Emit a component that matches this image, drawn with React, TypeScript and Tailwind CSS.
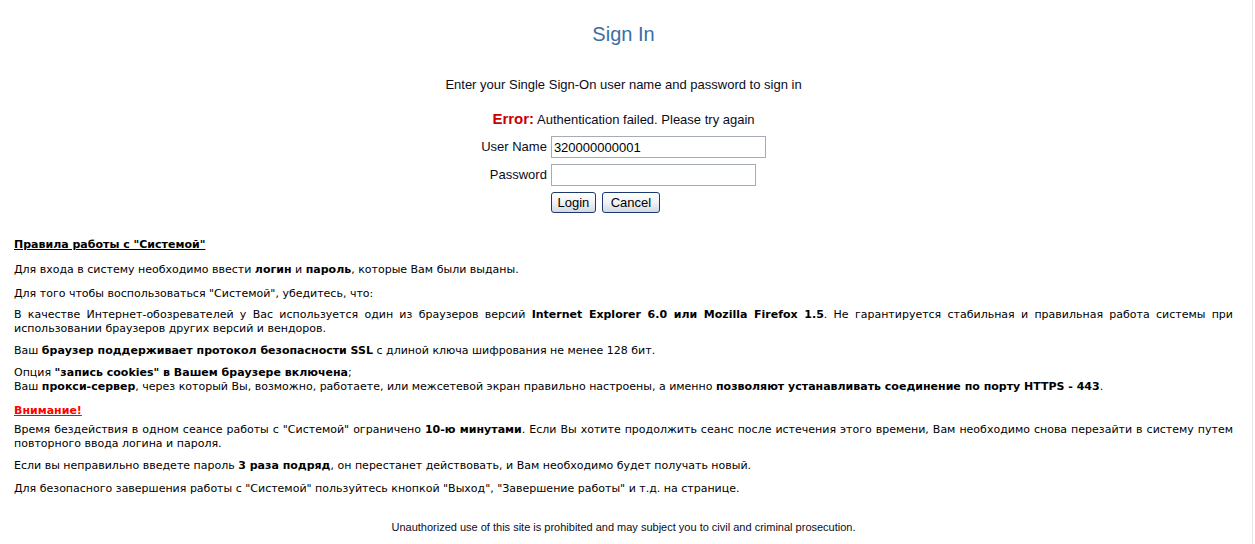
import React from 'react';

const body = "font-['DejaVu_Sans',Tahoma,sans-serif] text-[11px] leading-[14px] text-black";

function XpButton({ label, w }: { label: string; w: string }) {
  return (
    <button
      type="button"
      className={`${w} h-[21px] rounded-[3px] border border-[#1c3a6b] bg-gradient-to-b from-white via-[#f1f2f6] to-[#d3d8e4] text-[13px] leading-[19px] text-black font-['Liberation_Sans',Arial,sans-serif]`}
    >
      {label}
    </button>
  );
}

export default function App() {
  return (
    <div className="flex min-h-[544px] w-[1255px] bg-white">
      <div className="w-[1253px] border-r border-[#e6e6e6] pt-[22px]">
        {/* Sign-in form */}
        <div className="flex w-[1247px] flex-col items-center font-['Liberation_Sans',Arial,sans-serif] text-[#0b0b1a]">
          <h1 className="text-[20px] leading-[24px] text-[#3a6ea5]">Sign In</h1>
          <p className="mt-[31px] text-[13px] leading-[16px]">
            Enter your Single Sign-On user name and password to sign in
          </p>
          <p className="mt-[18px] text-[13px] leading-[16px]">
            <span className="text-[15px] font-bold text-[#cc0000]">Error:</span> Authentication failed. Please try again
          </p>
          <div className="mt-[8px] grid grid-cols-[auto_auto] items-center gap-x-[4px] gap-y-[6px] text-[13px]">
            <label className="text-right">User Name</label>
            <input
              defaultValue="320000000001"
              className="h-[22px] w-[215px] border border-[#a5acb5] px-[2px] text-[13px] text-black outline-none"
            />
            <label className="text-right">Password</label>
            <input
              type="password"
              className="h-[22px] w-[205px] border border-[#a5acb5] px-[2px] text-[13px] outline-none"
            />
            <span />
            <div className="flex gap-[6px]">
              <XpButton label="Login" w="w-[45px]" />
              <XpButton label="Cancel" w="w-[58px]" />
            </div>
          </div>
        </div>

        {/* Rules */}
        <div className={`${body} mt-[25px] w-[1247px] px-[14px]`}>
          <p className="font-bold underline">Правила работы с "Системой"</p>
          <p className="mt-[11px]">
            Для входа в систему необходимо ввести <b>логин</b> и <b>пароль</b>, которые Вам были выданы.
          </p>
          <p className="mt-[10px]">Для того чтобы воспользоваться "Системой", убедитесь, что:</p>
          <p className="mt-[7px] text-justify">
            В качестве Интернет-обозревателей у Вас используется один из браузеров версий{' '}
            <b>Internet Explorer 6.0 или Mozilla Firefox 1.5</b>. Не гарантируется стабильная и правильная работа
            системы при использовании браузеров других версий и вендоров.
          </p>
          <p className="mt-[8px]">
            Ваш <b>браузер поддерживает протокол безопасности SSL</b> с длиной ключа шифрования не менее 128 бит.
          </p>
          <p className="mt-[8px]">
            Опция <b>"запись cookies" в Вашем браузере включена</b>;
            <br />
            Ваш <b>прокси-сервер</b>, через который Вы, возможно, работаете, или межсетевой экран правильно
            настроены, а именно <b>позволяют устанавливать соединение по порту HTTPS - 443</b>.
          </p>
          <p className="mt-[10px] font-bold text-[#ff0000] underline">Внимание!</p>
          <p className="mt-[5px] text-justify">
            Время бездействия в одном сеансе работы с "Системой" ограничено <b>10-ю минутами</b>. Если Вы хотите
            продолжить сеанс после истечения этого времени, Вам необходимо снова перезайти в систему путем
            повторного ввода логина и пароля.
          </p>
          <p className="mt-[8px]">
            Если вы неправильно введете пароль <b>3 раза подряд</b>, он перестанет действовать, и Вам необходимо
            будет получать новый.
          </p>
          <p className="mt-[9px]">
            Для безопасного завершения работы с "Системой" пользуйтесь кнопкой "Выход", "Завершение работы" и т.д. на
            странице.
          </p>
        </div>

        {/* Footer */}
        <p className="mt-[24px] w-[1247px] text-center font-['Liberation_Sans',Arial,sans-serif] text-[11px] leading-[14px] text-[#0b0b1a]">
          Unauthorized use of this site is prohibited and may subject you to civil and criminal prosecution.
        </p>
      </div>
    </div>
  );
}
